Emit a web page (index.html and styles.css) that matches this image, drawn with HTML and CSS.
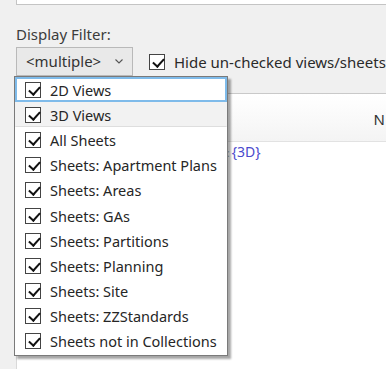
FILE: index.html
```html
<!DOCTYPE html>
<html lang="en">
<head>
    <meta charset="UTF-8">
    <title>Display Filter</title>
    <link rel="stylesheet" href="styles.css">
</head>
<body>

    <div class="panel">
        <div class="top-box"></div>

        <div class="filter-label">Display Filter:</div>

        <div class="filter-bar">
            <div class="combo">
                <span>&lt;multiple&gt;</span>
                <svg class="chevron" width="8" height="5" viewBox="0 0 8 5">
                    <path d="M0.5 0.5 L4 4 L7.5 0.5" fill="none" stroke="#555" stroke-width="1.1"/>
                </svg>
            </div>
            <label class="hide-check">
                <span class="box checked"></span>
                Hide un-checked views/sheets
            </label>
        </div>

        <!-- Views table -->
        <div class="table">
            <div class="table-head">
                <span class="col-name">N</span>
            </div>
            <div class="table-row">
                <span class="dots">:</span><span class="view-name">{3D}</span>
            </div>
        </div>

        <!-- Dropdown list, open -->
        <ul class="dropdown">
            <li class="focused"><span class="box checked"></span>2D Views</li>
            <li class="hovered"><span class="box checked"></span>3D Views</li>
            <li><span class="box checked"></span>All Sheets</li>
            <li><span class="box checked"></span>Sheets: Apartment Plans</li>
            <li><span class="box checked"></span>Sheets: Areas</li>
            <li><span class="box checked"></span>Sheets: GAs</li>
            <li><span class="box checked"></span>Sheets: Partitions</li>
            <li><span class="box checked"></span>Sheets: Planning</li>
            <li><span class="box checked"></span>Sheets: Site</li>
            <li><span class="box checked"></span>Sheets: ZZStandards</li>
            <li><span class="box checked"></span>Sheets not in Collections</li>
        </ul>
    </div>

</body>
</html>
```

FILE: styles.css
```css
* {
    margin: 0;
    padding: 0;
    box-sizing: border-box;
}

body {
    font-family: 'Noto Sans', 'Open Sans', sans-serif;
    font-size: 15px;
    color: #333;
    background-color: #f0f0f0;
    width: 386px;
    height: 369px;
    overflow: hidden;
}

.panel {
    position: relative;
    padding-left: 16px;
    height: 369px;
}

.top-box {
    height: 5px;
    background: #fff;
    border: 1px solid #c4c4c4;
    border-top: none;
    border-right: none;
}

.filter-label {
    margin-top: 20px;
    height: 22px;
    line-height: 18px;
    color: #3c3c3c;
}

.filter-bar {
    display: flex;
    align-items: center;
    height: 29px;
}

.combo {
    width: 117px;
    height: 29px;
    display: flex;
    align-items: center;
    justify-content: space-between;
    padding: 0 9px 2px 9px;
    border: 1px solid #b9b9b9;
    background: #e9e9e9;
    color: #333;
}

.chevron {
    margin-top: 2px;
}

.hide-check {
    display: flex;
    align-items: center;
    margin-left: 16px;
    white-space: nowrap;
    color: #2a2a2a;
}

.hide-check .box {
    margin-right: 9px;
}

.box {
    display: inline-block;
    width: 16px;
    height: 16px;
    border: 1px solid #444;
    background: #fff;
    position: relative;
    flex-shrink: 0;
}

.box.checked::after {
    content: "";
    position: absolute;
    left: 2px;
    top: 1px;
    width: 9px;
    height: 5px;
    border-left: 2px solid #111;
    border-bottom: 2px solid #111;
    transform: translate(1px, 2px) rotate(-48deg);
    transform-origin: center;
}

.table {
    margin-top: 17px;
    background: #fff;
    border-top: 1px solid #c9c9c9;
    border-left: 1px solid #d9d9d9;
    height: 280px;
}

.table-head {
    height: 48px;
    display: flex;
    justify-content: flex-end;
    align-items: center;
    background: linear-gradient(#ffffff, #f4f4f4);
    border-bottom: 1px solid #e2e2e2;
    padding-top: 2px;
    padding-right: 1px;
    overflow: hidden;
}

.col-name {
    color: #333;
    font-size: 15px;
}

.table-row {
    height: 22px;
    padding-left: 210px;
    line-height: 20px;
    font-size: 14px;
    color: #4a4acd;
}

.dots {
    color: #9aa;
    margin-right: 2px;
    font-size: 10px;
}

/* open dropdown list */
.dropdown {
    list-style: none;
    position: absolute;
    left: 14px;
    top: 76px;
    width: 214px;
    background: #fff;
    border: 1px solid #7a7a7a;
    box-shadow: 3px 3px 2px rgba(0, 0, 0, 0.35);
    padding: 0 0 1px 0;
}

.dropdown li {
    display: flex;
    align-items: center;
    height: 25.2px;
    padding-left: 9px;
    font-size: 14.5px;
    color: #262626;
    white-space: nowrap;
    border: 1px solid transparent;
}

.dropdown li .box {
    margin-right: 9px;
}

.dropdown li.focused {
    border: 2px solid #7fbbea;
    padding-left: 8px;
}

.dropdown li.hovered {
    background: #f2f2f2;
    border-bottom: 1px solid #dedede;
}
```
